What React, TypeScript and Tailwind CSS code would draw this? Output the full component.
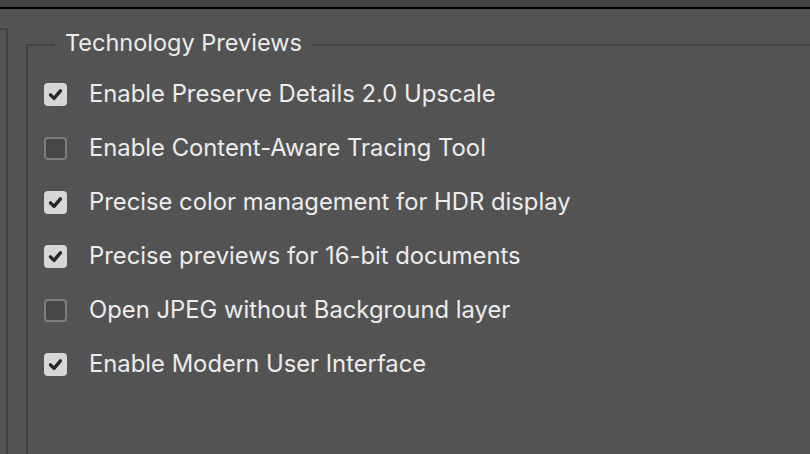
import React from 'react';

const items = [
  { label: 'Enable Preserve Details 2.0 Upscale', checked: true },
  { label: 'Enable Content-Aware Tracing Tool', checked: false },
  { label: 'Precise color management for HDR display', checked: true },
  { label: 'Precise previews for 16-bit documents', checked: true },
  { label: 'Open JPEG without Background layer', checked: false },
  { label: 'Enable Modern User Interface', checked: true },
];

const Box: React.FC<{ checked: boolean }> = ({ checked }) =>
  checked ? (
    <div className="w-[23px] h-[23px] rounded-[4px] bg-[#d6d6d6] flex items-center justify-center shrink-0">
      <svg width="23" height="23" viewBox="0 0 22 22">
        <path d="M6.2 11.3 L9.6 14.7 L15.7 7.5" fill="none" stroke="#262626" strokeWidth="3.2" strokeLinecap="round" strokeLinejoin="round" />
      </svg>
    </div>
  ) : (
    <div className="w-[23px] h-[23px] rounded-[4px] bg-[#474747] border-2 border-[#7e7e7e] shrink-0" />
  );

const App: React.FC = () => {
  return (
    <div className="w-[810px] h-[454px] overflow-hidden bg-[#535353] flex flex-col font-['Inter',sans-serif] text-[#ececec]">
      <div className="h-[7px] bg-[#434446] shrink-0" />
      <div className="h-[2px] bg-black shrink-0" />
      <div className="flex flex-1">
        <div className="w-[8px] mt-[19px] border-t-2 border-r-2 border-[#424242] shrink-0" />
        <fieldset className="ml-[18px] mt-[22px] w-[900px] h-[520px] shrink-0 border-2 border-[#424242] pl-[16px]">
          <legend className="ml-[11px] px-[10px] pb-[4px] text-[23.5px] leading-[24px]">Technology Previews</legend>
          <div className="flex flex-col pt-[8px]">
            {items.map((it) => (
              <div key={it.label} className="h-[54px] flex items-center gap-[22px]">
                <Box checked={it.checked} />
                <span className="text-[23.8px] leading-none">{it.label}</span>
              </div>
            ))}
          </div>
        </fieldset>
      </div>
    </div>
  );
};

export default App;
